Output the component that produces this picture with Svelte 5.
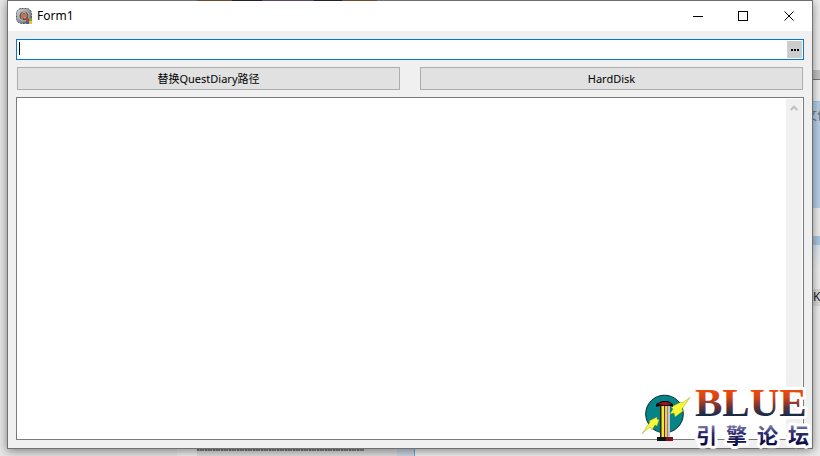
<script>
  let path = $state('');
  let log = $state('');
</script>

<div class="desktop">
  <div class="behind-bottom" aria-hidden="true">
    <span class="strip"></span>
    <span class="blue"></span>
    <span class="rest"></span>
  </div>
  <div class="behind-right" aria-hidden="true">
    <span class="bar"></span>
    <span class="gap"></span>
    <span class="selected"><span class="label">文件</span></span>
    <span class="pale"></span>
    <span class="line"></span>
    <span class="fade"></span>
    <span class="key"><span class="label">K</span></span>
  </div>

  <main class="window">
    <header>
      <svg class="app-icon" viewBox="0 0 16 16" aria-hidden="true">
        <defs>
          <linearGradient id="metal" x1="0" y1="0" x2="1" y2="1">
            <stop offset="0" stop-color="#d3dbe0" />
            <stop offset=".5" stop-color="#8c9ba6" />
            <stop offset="1" stop-color="#47525c" />
          </linearGradient>
        </defs>
        <rect x=".5" y=".5" width="15" height="15" rx="5" fill="url(#metal)" stroke="#4e5458" stroke-dasharray="2 1" />
        <circle cx="8" cy="8" r="5" fill="#7d4a34" stroke="#b9c4cc" />
        <path d="M6 12V6q0-1.500 2-1.500T10 6v3q0 1-2 1M8 6v4" fill="none" stroke="#cfae9c" />
        <path d="M10 10h3v3h-3z" fill="#d23c2b" />
        <path d="M13 10h3v3h-3z" fill="#6fa944" />
        <path d="M10 13h3v3h-3z" fill="#3c62bd" />
        <path d="M13 13h3v3h-3z" fill="#e7c42f" />
      </svg>
      <h1>Form1</h1>
      <div class="controls">
        <button type="button" aria-label="Minimize">
          <svg viewBox="0 0 11 11"><path d="M1 5.500h10" /></svg>
        </button>
        <button type="button" aria-label="Maximize">
          <svg viewBox="0 0 11 11"><path d="M.5.5h9v9h-9z" /></svg>
        </button>
        <button type="button" aria-label="Close">
          <svg class="smooth" viewBox="0 0 11 11"><path d="M.5.5l9 9M9.500.5l-9 9" /></svg>
        </button>
      </div>
    </header>

    <div class="client">
      <div class="path-box">
        <span class="caret" aria-hidden="true"></span>
        <input type="text" aria-label="Path" bind:value={path} />
        <button type="button" aria-label="Browse">
          <svg viewBox="0 0 8 2"><path d="M0 0h2v2H0zM3 0h2v2H3zM6 0h2v2H6z" /></svg>
        </button>
      </div>
      <div class="actions">
        <button type="button">替换QuestDiary路径</button>
        <button type="button">HardDisk</button>
      </div>
      <div class="memo">
        <textarea aria-label="Log" bind:value={log}></textarea>
        <div class="scrollbar" aria-hidden="true">
          <svg viewBox="0 0 8 6"><path d="M.7 5L4 1.700 7.300 5" /></svg>
        </div>
      </div>
    </div>
  </main>

  <div class="top-edge" aria-hidden="true"></div>

  <svg class="watermark" viewBox="0 0 180 72" role="img" aria-label="BLUE 引擎论坛">
    <defs>
      <linearGradient id="fire" gradientUnits="userSpaceOnUse" x1="0" y1="8" x2="0" y2="36">
        <stop offset="0" stop-color="#f04a0c" />
        <stop offset=".3" stop-color="#d64516" />
        <stop offset=".65" stop-color="#653238" />
        <stop offset="1" stop-color="#06294c" />
      </linearGradient>
      <linearGradient id="night" gradientUnits="userSpaceOnUse" x1="0" y1="42" x2="0" y2="64">
        <stop offset="0" stop-color="#9a9ac4" />
        <stop offset=".45" stop-color="#2c2c72" />
        <stop offset="1" stop-color="#080840" />
      </linearGradient>
    </defs>
    <circle cx="24.500" cy="33" r="18.800" fill="#058487" stroke="#0b2b31" />
    <path d="M50 16.500L42 22l-1-1-10 5 2 2-3 5 4-1 1 4 8-6-1-2z" fill="#f7f735" stroke="#7f8a20" stroke-width=".4" />
    <path d="M2 52.500L10 41l-1-1 8-4v2l2 1-2 6-2-1-3 5-2-3z" fill="#f7f735" stroke="#7f8a20" stroke-width=".4" />
    <path d="M20 24h10v32H20z" fill="#2a2028" />
    <path d="M21 25h1v31h-1z" fill="#8a8420" />
    <path d="M22 25h2v31h-2z" fill="#f0e634" />
    <path d="M24 25h1v31h-1z" fill="#7a2428" />
    <path d="M25 25h2v31h-2z" fill="#e2d43a" />
    <path d="M27 25h1v31h-1z" fill="#8c8490" />
    <path d="M28 25h2v31h-2z" fill="#c9c2cf" />
    <path d="M16 23l6-3h6l5 3v3l-3-1H20l-4 1z" fill="#1d080b" />
    <path d="M18 23l5-2h4l5 2-5 1h-5z" fill="#971421" />
    <path d="M17 56h9v4h-9z" fill="#141017" />
    <path d="M26 56h7v4h-7z" fill="#7c101c" />
    <text class="brand" x="55" y="35">BLUE</text>
    <text class="forum" x="56 86 117 148" y="62">引擎论坛</text>
  </svg>
</div>

<style>
  :global(body) {
    margin: 0;
  }
  .desktop {
    position: relative;
    box-sizing: border-box;
    height: 100vh;
    padding: 0 7px 7px;
    overflow: hidden;
    background: #e6e6e6;
    font: 12px/16px "Noto Sans", "Noto Sans CJK SC", sans-serif;
  }
  .behind-bottom {
    position: absolute;
    inset: auto 0 0 177px;
    display: flex;
    height: 7px;
    background: #ededed;
  }
  .strip {
    width: 220px;
    box-sizing: border-box;
    border-left: 20px solid #ededed;
    background: repeating-linear-gradient(90deg, #777 0 2px, #aaa 2px 3px, #888 3px 7px, #bbb 7px 8px) 0 0 / 167px 2px no-repeat #dedede;
  }
  .blue {
    width: 17px;
    border-right: 1px solid #6ca9dc;
    background: #cdd7e3;
  }
  .rest {
    flex: 1;
    background: #f0f0f0;
  }
  .behind-right {
    position: absolute;
    inset: 0 0 0 auto;
    display: flex;
    flex-direction: column;
    width: 7px;
    background: #ececec;
  }
  .bar {
    box-sizing: border-box;
    height: 80px;
    border-bottom: 1px solid #777;
    background: linear-gradient(#ececec 70px, #c2c2c2 70px);
  }
  .gap {
    height: 21px;
    background: #efefef;
  }
  .selected {
    height: 107px;
    border-top: 1px solid #9dc3e6;
    box-sizing: border-box;
    background: #b9cfe6;
  }
  .label {
    display: block;
    width: 7px;
    height: 16px;
    overflow: hidden;
    white-space: nowrap;
  }
  .selected .label {
    margin-top: 6px;
    color: #62707f;
    text-indent: -8px;
  }
  .pale {
    height: 28px;
    background: #ededed;
  }
  .line {
    height: 9px;
    background: #a9c6e2;
  }
  .fade {
    height: 44px;
    background: linear-gradient(#dce4ec, #efefef 24px);
  }
  .key {
    height: 17px;
    background: #d9d9d9;
    color: #222;
  }
  .window {
    position: relative;
    display: flex;
    flex-direction: column;
    box-sizing: border-box;
    height: 100%;
    border: 1px solid #707070;
    background: #f0f0f0;
    box-shadow: 0 2px 9px rgb(0 0 0 / 45%);
  }
  header {
    display: flex;
    align-items: center;
    height: 30px;
    padding-left: 8px;
    background: #fff;
  }
  .app-icon {
    width: 16px;
    height: 16px;
  }
  h1 {
    margin: 0 0 0 5px;
    font-size: 12px;
    font-weight: 400;
  }
  .controls {
    display: flex;
    height: 100%;
    margin-left: auto;
  }
  .controls button {
    display: grid;
    place-items: center;
    width: 46px;
    padding: 0;
    border: 0;
    background: none;
  }
  .controls svg {
    width: 11px;
    height: 11px;
    fill: none;
    stroke: #000;
    shape-rendering: crispEdges;
  }
  .controls .smooth {
    shape-rendering: auto;
  }
  .client {
    display: flex;
    flex: 1;
    flex-direction: column;
    gap: 7px;
    min-height: 0;
    padding: 8px;
  }
  .path-box {
    display: flex;
    box-sizing: border-box;
    height: 21px;
    padding: 1px;
    border: 1px solid #0078d7;
    background: #fff;
  }
  .caret {
    width: 1px;
    height: 13px;
    margin: 1px 0 0 1px;
    background: #000;
  }
  input {
    flex: 1;
    min-width: 0;
    padding: 0;
    border: 0;
    outline: 0;
    background: none;
    font: inherit;
  }
  .path-box button {
    display: grid;
    place-items: center;
    width: 15px;
    padding: 0;
    border: 0;
    background: #cdcdcd;
  }
  .path-box button svg {
    width: 8px;
    height: 2px;
  }
  .actions {
    display: grid;
    grid-template-columns: 1fr 1fr;
    gap: 20px;
    padding: 0 1px;
  }
  .actions button {
    height: 23px;
    padding: 0;
    border: 1px solid #adadad;
    background: #e1e1e1;
    color: #000;
    font: 11px/16px "Noto Sans", "Noto Sans CJK SC", sans-serif;
  }
  .memo {
    display: flex;
    flex: 1;
    min-height: 0;
    padding: 1px;
    border: 1px solid #7a7a7a;
    background: #fff;
  }
  textarea {
    flex: 1;
    min-width: 0;
    padding: 0;
    border: 0;
    outline: 0;
    resize: none;
    font: inherit;
  }
  .scrollbar {
    width: 16px;
    background: #f0f0f0;
  }
  .scrollbar svg {
    display: block;
    width: 8px;
    height: 6px;
    margin: 6px auto;
    fill: none;
    stroke: #bfbfbf;
    stroke-width: 2;
  }
  .top-edge {
    position: absolute;
    top: 0;
    left: 197px;
    width: 180px;
    height: 1px;
    background: linear-gradient(90deg, #6b4a30 35px, #231f20 35px 65px, #5a4763 65px 117px, #231f20 117px 145px, #6d4c32 145px);
  }
  .watermark {
    position: absolute;
    right: 0;
    bottom: 3px;
    width: 180px;
    height: 72px;
  }
  .watermark text {
    stroke: #fff;
    stroke-width: 6px;
    stroke-linejoin: round;
    paint-order: stroke;
  }
  .brand {
    fill: url(#fire);
    font: bold 41px "Liberation Serif", serif;
  }
  .forum {
    fill: url(#night);
    font: bold 21px "Noto Sans CJK SC", sans-serif;
  }
</style>
